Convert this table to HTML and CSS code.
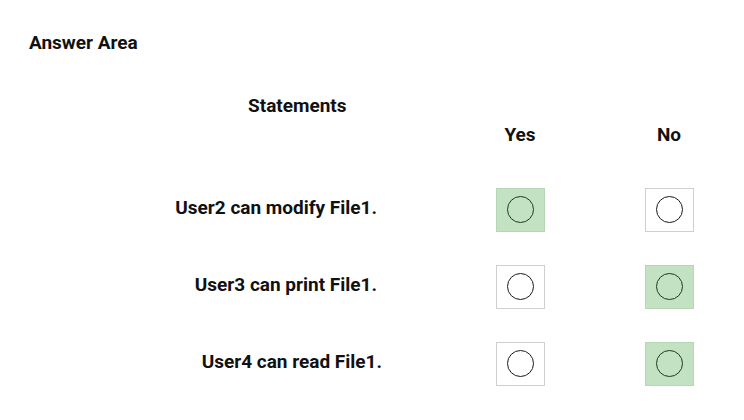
FILE: index.html
```html
<!DOCTYPE html>
<html>
<head>
<meta charset="utf-8">
<link rel="stylesheet" href="styles.css">
</head>
<body>
<div class="page">
  <h1 class="title">Answer Area</h1>
  <div class="stmt-head">Statements</div>
  <div class="grid">
    <div class="cell"></div>
    <div class="col-head">Yes</div>
    <div class="col-head">No</div>

    <div class="stmt">User2 can modify File1.</div>
    <div class="opt"><span class="box sel"><span class="ring"></span></span></div>
    <div class="opt"><span class="box"><span class="ring"></span></span></div>

    <div class="stmt">User3 can print File1.</div>
    <div class="opt"><span class="box"><span class="ring"></span></span></div>
    <div class="opt"><span class="box sel"><span class="ring"></span></span></div>

    <div class="stmt shift">User4 can read File1.</div>
    <div class="opt"><span class="box"><span class="ring"></span></span></div>
    <div class="opt"><span class="box sel"><span class="ring"></span></span></div>
  </div>
</div>
</body>
</html>
```

FILE: styles.css
```css
html, body {
  margin: 0;
  padding: 0;
  background: #fff;
}
.page {
  width: 744px;
  height: 420px;
  font-family: Roboto, "Liberation Sans", sans-serif;
  font-weight: 700;
  color: #111;
  padding-top: 32px;
  box-sizing: border-box;
}
.title {
  margin: 0 0 0 29px;
  font-size: 19px;
  line-height: 22px;
  font-weight: 700;
}
.stmt-head {
  margin: 41px 0 0 248px;
  font-size: 19px;
  line-height: 22px;
}
.grid {
  display: grid;
  grid-template-columns: 440px 160px 138px;
  grid-template-rows: 47px repeat(3, 77px);
  margin-top: 7px;
}
.col-head {
  font-size: 19px;
  line-height: 22px;
  text-align: center;
}
.stmt {
  font-size: 19px;
  line-height: 22px;
  text-align: right;
  padding-right: 63px;
  align-self: center;
  margin-bottom: 4px;
}
.stmt.shift {
  padding-right: 58px;
}
.opt {
  display: flex;
  justify-content: center;
  align-items: center;
}
.box {
  width: 47px;
  height: 42px;
  border: 1px solid #cfcfcf;
  background: #fff;
  display: flex;
  align-items: center;
  justify-content: center;
}
.box.sel {
  background: #c3e2c2;
  border-color: #b8d6b6;
}
.ring {
  width: 25px;
  height: 25px;
  border: 1.6px solid #1a1a1a;
  border-radius: 50%;
}
.box.sel .ring {
  border-color: #1c3a1f;
}
```
